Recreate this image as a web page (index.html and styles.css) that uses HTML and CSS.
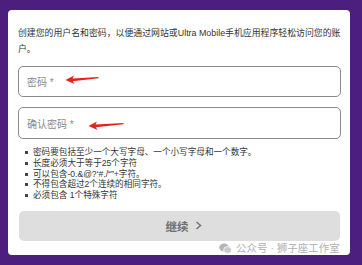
FILE: index.html
```html
<!DOCTYPE html>
<html lang="zh-CN">
<head>
<meta charset="utf-8">
<link rel="stylesheet" href="styles.css">
</head>
<body>
<div class="card">
  <p class="intro">创建您的用户名和密码，以便通过网站或Ultra Mobile手机应用程序轻松访问您的账户。</p>
  <div class="field f1">
    <span class="ph">密码 *</span>
    <svg class="arrow a1" width="34" height="10" viewBox="0 0 34 10"><polygon points="0.5,6 9,1.5 7.5,4.6 33.5,3 33.5,4.2 7.8,7.2 9.5,10" fill="#e3231c"/></svg>
  </div>
  <div class="field f2">
    <span class="ph">确认密码 *</span>
    <svg class="arrow a2" width="36" height="10" viewBox="0 0 36 10"><polygon points="0.5,6 9,1.5 7.5,4.6 35.5,3 35.5,4.2 7.8,7.2 9.5,10" fill="#e3231c"/></svg>
  </div>
  <ul class="rules">
    <li>密码要包括至少一个大写字母、一个小写字母和一个数字。</li>
    <li>长度必须大于等于25个字符</li>
    <li>可以包含-0.&amp;@?‘#./“”+字符。</li>
    <li>不得包含超过2个连续的相同字符。</li>
    <li>必须包含 1个特殊字符</li>
  </ul>
  <div class="btn">继续<svg class="chev" width="7" height="9" viewBox="0 0 7 9"><path d="M1.5 1 L5.5 4.5 L1.5 8" fill="none" stroke="#777" stroke-width="1.6"/></svg></div>
</div>
<div class="wm">
  <svg class="wx" width="13" height="11" viewBox="0 0 13 11"><ellipse cx="5" cy="4.5" rx="4.8" ry="4" fill="#b5b5b5"/><ellipse cx="8.6" cy="7" rx="4" ry="3.4" fill="#c9c9c9" stroke="#fff" stroke-width="0.8"/></svg>
  <span>公众号 · 狮子座工作室</span>
</div>
</body>
</html>
```
FILE: styles.css
```css
html, body {
  margin: 0;
  padding: 0;
}
body {
  width: 362px;
  height: 265px;
  background: #4c1f7e;
  padding: 10px 12px 10px 8px;
  box-sizing: border-box;
  font-family: "Liberation Sans", "Noto Sans CJK SC", sans-serif;
  position: relative;
  overflow: hidden;
}
.card {
  background: #fff;
  border-radius: 4px;
  height: 245px;
  box-sizing: border-box;
  padding: 15px 9px 14px 10px;
  display: flex;
  flex-direction: column;
}
.intro {
  margin: 0 0 9px;
  font-size: 8.9px;
  line-height: 16px;
  color: #333;
  width: 330px;
}
.field {
  position: relative;
  border: 1px solid #8a8a8a;
  border-radius: 5px;
  box-sizing: border-box;
  display: flex;
  align-items: center;
  padding-left: 8px;
}
.f1 { height: 31px; }
.f2 { height: 32px; margin-top: 10px; }
.ph {
  font-size: 10px;
  color: #8a8a8a;
}
.arrow {
  position: absolute;
}
.a1 { left: 46px; top: 7px; }
.a2 { left: 69px; top: 12px; }
.rules {
  list-style: none;
  margin: 8px 0 0;
  padding: 0 0 0 15px;
  font-size: 8.6px;
  line-height: 10.8px;
  color: #333;
}
.rules li {
  position: relative;
}
.rules li::before {
  content: "";
  position: absolute;
  left: -8px;
  top: 4px;
  width: 3px;
  height: 3px;
  background: #444;
}
.btn {
  margin: 10px 1px 0;
  height: 30px;
  background: #dedede;
  border-radius: 5px;
  display: flex;
  align-items: center;
  justify-content: center;
  gap: 6px;
  font-size: 11.5px;
  font-weight: bold;
  color: #707070;
  padding-left: 8px;
}
.chev { display: block; }
.wm {
  position: absolute;
  left: 219px;
  top: 242px;
  display: flex;
  align-items: center;
  gap: 4px;
  font-size: 10.5px;
  line-height: 13px;
  color: #b0b0b0;
}
.wx { display: block; }
```
